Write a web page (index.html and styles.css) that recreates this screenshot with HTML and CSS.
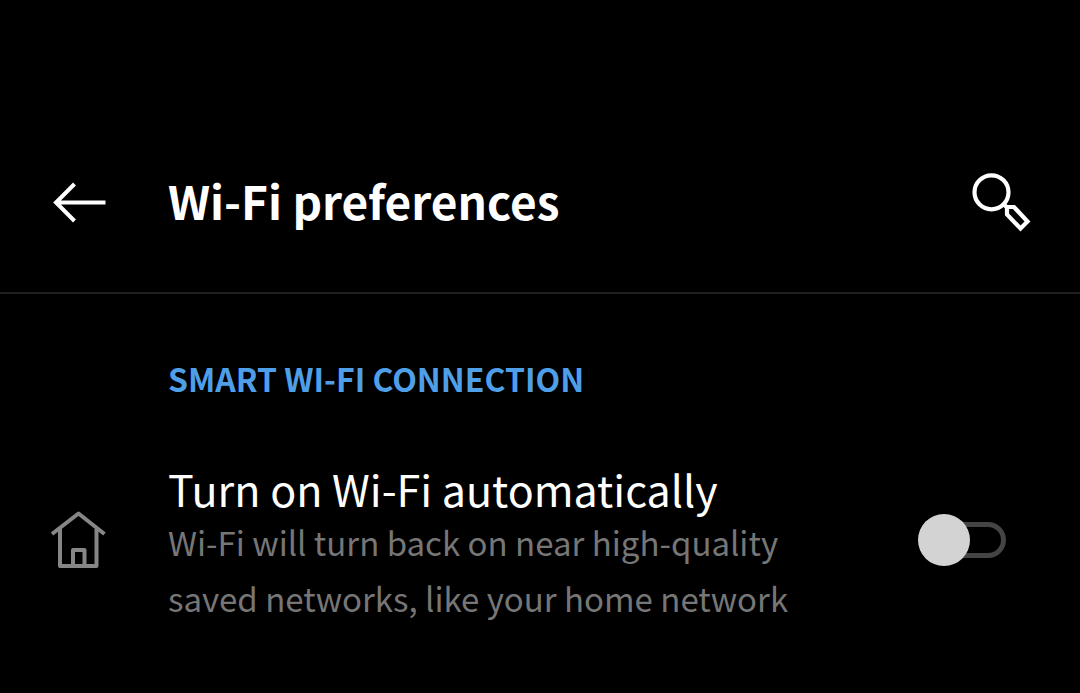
FILE: index.html
```html
<!DOCTYPE html>
<html lang="en">
<head>
<meta charset="utf-8">
<meta name="viewport" content="width=device-width, initial-scale=1">
<title>Wi-Fi preferences</title>
<link rel="stylesheet" href="styles.css">
</head>
<body>
<header class="bar">
  <button class="icon-button" type="button" aria-label="Back">
    <svg class="icon" width="60" height="60" viewBox="0 0 60 60" stroke-width="4"><path d="M26.500 12 8 30.500 26.500 49M8 30.500H57.500"/></svg>
  </button>
  <h1 class="bar-title">Wi-Fi preferences</h1>
  <button class="icon-button" type="button" aria-label="Search">
    <svg class="icon" width="60" height="60" viewBox="0 0 60 60" stroke-width="4.2"><circle cx="19.500" cy="20.300" r="17"/><path d="M31.500 32 34.500 35H42L55.500 49.500 48.500 56.500 35 42.500V35"/></svg>
  </button>
</header>
<main class="section">
  <h2 class="section-title">SMART WI-FI CONNECTION</h2>
  <div class="item">
    <svg class="icon item-icon" width="60" height="60" viewBox="0 0 60 60" stroke-width="4" stroke-linejoin="round" aria-hidden="true"><path d="M4 24 30.500 3.500 56.500 24M12 19V56H48.500V19M25 56V40H36.500V56"/></svg>
    <label class="item-text" for="auto-wifi">
      <span class="item-title">Turn on Wi-Fi automatically</span>
      <span class="item-note">Wi-Fi will turn back on near high-quality saved networks, like your home network</span>
    </label>
    <input class="switch" type="checkbox" role="switch" id="auto-wifi">
  </div>
</main>
</body>
</html>
```
FILE: styles.css
```css
* {
  box-sizing: border-box;
}

body {
  margin: 0;
  background: #000;
  color: #fff;
  font-family: "Noto Sans CJK JP", "Noto Sans", sans-serif;
}

.bar {
  display: grid;
  grid-template-columns: 60px 1fr 60px;
  column-gap: 60px;
  align-items: center;
  padding: 168px 48px 56px;
  border-bottom: 2px solid #1f1f1f;
}

.icon-button {
  display: flex;
  padding: 0;
  border: 0;
  background: none;
  color: inherit;
}

.icon {
  display: block;
  fill: none;
  stroke: currentColor;
}

.bar-title {
  margin: 0;
  padding-bottom: 4px;
  font-size: 46px;
  font-weight: 700;
  line-height: 64px;
}

.section {
  padding: 62px 48px;
}

.section-title {
  margin: 0 0 54px 120px;
  color: #4f9fe8;
  font-size: 32px;
  font-weight: 700;
  line-height: 44px;
}

.item {
  display: grid;
  grid-template-columns: 60px 1fr 88px;
  column-gap: 60px;
  align-items: center;
  padding-right: 26px;
}

.item-icon {
  color: #868686;
}

.item-text {
  display: flex;
  flex-direction: column;
  max-width: 640px;
  padding-top: 8px;
}

.item-title {
  font-size: 43px;
  line-height: 52px;
}

.item-note {
  color: #767676;
  font-size: 33px;
  line-height: 56px;
}

.switch {
  position: relative;
  appearance: none;
  width: 88px;
  height: 52px;
  margin: 0;
}

.switch::before {
  content: "";
  position: absolute;
  inset: 8px 0 8px 16px;
  border: 5px solid #444;
  border-radius: 18px;
}

.switch::after {
  content: "";
  position: absolute;
  inset: 0 auto 0 0;
  width: 52px;
  border-radius: 50%;
  background: #d3d3d3;
}

.switch:checked::after {
  inset: 0 0 0 auto;
}
```
